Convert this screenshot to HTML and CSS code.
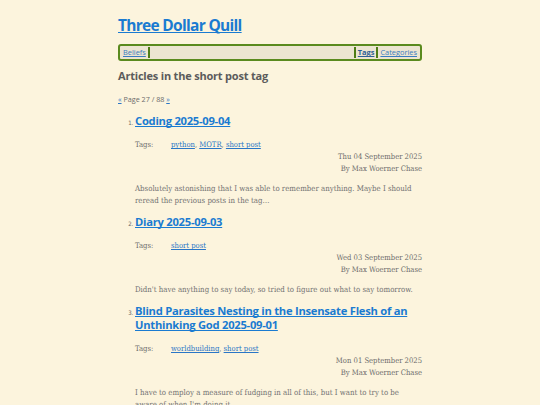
FILE: index.html
```html
<!DOCTYPE html>
<html lang="en">
<head>
<meta charset="utf-8">
<title>Three Dollar Quill</title>
<link rel="stylesheet" href="styles.css">
</head>
<body>
<div class="page">
  <header class="site-header">
    <h1 class="site-title"><a href="#">Three Dollar Quill</a></h1>
    <nav class="nav">
      <a class="nav-link" href="#">Beliefs</a>
      <span class="nav-sep"></span>
      <span class="nav-spacer"></span>
      <span class="nav-sep"></span>
      <a class="nav-link nav-active" href="#">Tags</a>
      <span class="nav-sep"></span>
      <a class="nav-link" href="#">Categories</a>
    </nav>
  </header>
  <main>
    <h2 class="page-heading">Articles in the short post tag</h2>
    <p class="pager"><a href="#">«</a> Page 27 / 88 <a href="#">»</a></p>
    <ol class="articles" start="1">
      <li class="article">
        <h3 class="article-title"><a href="#">Coding 2025-09-04</a></h3>
        <div class="tags-row"><span class="tags-label">Tags:</span><span class="tags-list"><a href="#">python</a>, <a href="#">MOTR</a>, <a href="#">short post</a></span></div>
        <div class="meta"><div>Thu 04 September 2025</div><div>By Max Woerner Chase</div></div>
        <p class="summary">Absolutely astonishing that I was able to remember anything. Maybe I should reread the previous posts in the tag…</p>
      </li>
      <li class="article">
        <h3 class="article-title"><a href="#">Diary 2025-09-03</a></h3>
        <div class="tags-row"><span class="tags-label">Tags:</span><span class="tags-list"><a href="#">short post</a></span></div>
        <div class="meta"><div>Wed 03 September 2025</div><div>By Max Woerner Chase</div></div>
        <p class="summary">Didn't have anything to say today, so tried to figure out what to say tomorrow.</p>
      </li>
      <li class="article">
        <h3 class="article-title"><a href="#">Blind Parasites Nesting in the Insensate Flesh of an Unthinking God 2025-09-01</a></h3>
        <div class="tags-row"><span class="tags-label">Tags:</span><span class="tags-list"><a href="#">worldbuilding</a>, <a href="#">short post</a></span></div>
        <div class="meta"><div>Mon 01 September 2025</div><div>By Max Woerner Chase</div></div>
        <p class="summary">I have to employ a measure of fudging in all of this, but I want to try to be aware of when I'm doing it.</p>
      </li>
    </ol>
  </main>
</div>
</body>
</html>
```
FILE: styles.css
```css
html, body {
  margin: 0;
  padding: 0;
  background: #fcf4dd;
}
body {
  font-family: "DejaVu Serif Condensed", "DejaVu Serif", serif;
  font-stretch: condensed;
  color: #6c6c6c;
  font-size: 7.6px;
  line-height: 12px;
}
a {
  color: #2a76c6;
  text-decoration-skip-ink: none;
}
.page {
  width: 304px;
  margin: 0 auto;
  padding-top: 14px;
}
.site-title {
  margin: 0;
  font-family: "Open Sans", sans-serif;
  font-stretch: normal;
  font-size: 15.5px;
  line-height: 22px;
  font-weight: 700;
  letter-spacing: -0.7px;
}
.site-title a {
  color: #1a7bd1;
}
.nav {
  margin-top: 8px;
  display: flex;
  align-items: stretch;
  height: 11px;
  border: 2px solid #5a8a1e;
  border-radius: 3px;
  background: #ece5d1;
  padding: 1px 2px;
  font-family: "Open Sans", sans-serif;
  font-stretch: normal;
  font-size: 7.4px;
  line-height: 11px;
}
.nav-link {
  color: #3a7cc0;
  padding: 0 1px;
}
.nav-active {
  font-weight: 700;
  color: #2d5f96;
}
.nav-sep {
  width: 2px;
  background: #4e7d16;
  margin: 0 1px;
}
.nav-spacer {
  flex: 1;
}
.page-heading {
  margin: 7px 0 0;
  font-family: "Open Sans", sans-serif;
  font-stretch: normal;
  font-size: 11px;
  line-height: 16px;
  font-weight: 700;
  color: #5b5b5b;
  letter-spacing: -0.2px;
}
.pager {
  margin: 10px 0 0;
  font-family: "Open Sans", sans-serif;
  font-stretch: normal;
  font-size: 7.2px;
  line-height: 10px;
}
.articles {
  margin: 10px 0 0;
  padding-left: 17px;
  font-size: 6px;
}
.article {
  margin-bottom: 8px;
}
.article::marker {
  font-family: "DejaVu Sans", sans-serif;
  color: #666;
}
.article-title {
  margin: 0;
  font-family: "Open Sans", sans-serif;
  font-stretch: normal;
  font-size: 11.2px;
  line-height: 14px;
  font-weight: 700;
  letter-spacing: -0.25px;
}
.article-title a {
  color: #1a7bd1;
}
.tags-row {
  display: flex;
  margin-top: 11px;
  font-size: 7.6px;
  line-height: 12px;
}
.tags-label {
  width: 36px;
}
.meta {
  text-align: right;
  font-size: 7.6px;
  line-height: 12px;
}
.summary {
  margin: 8px 0 0;
  font-size: 7.8px;
  line-height: 12px;
  color: #727272;
}
```
